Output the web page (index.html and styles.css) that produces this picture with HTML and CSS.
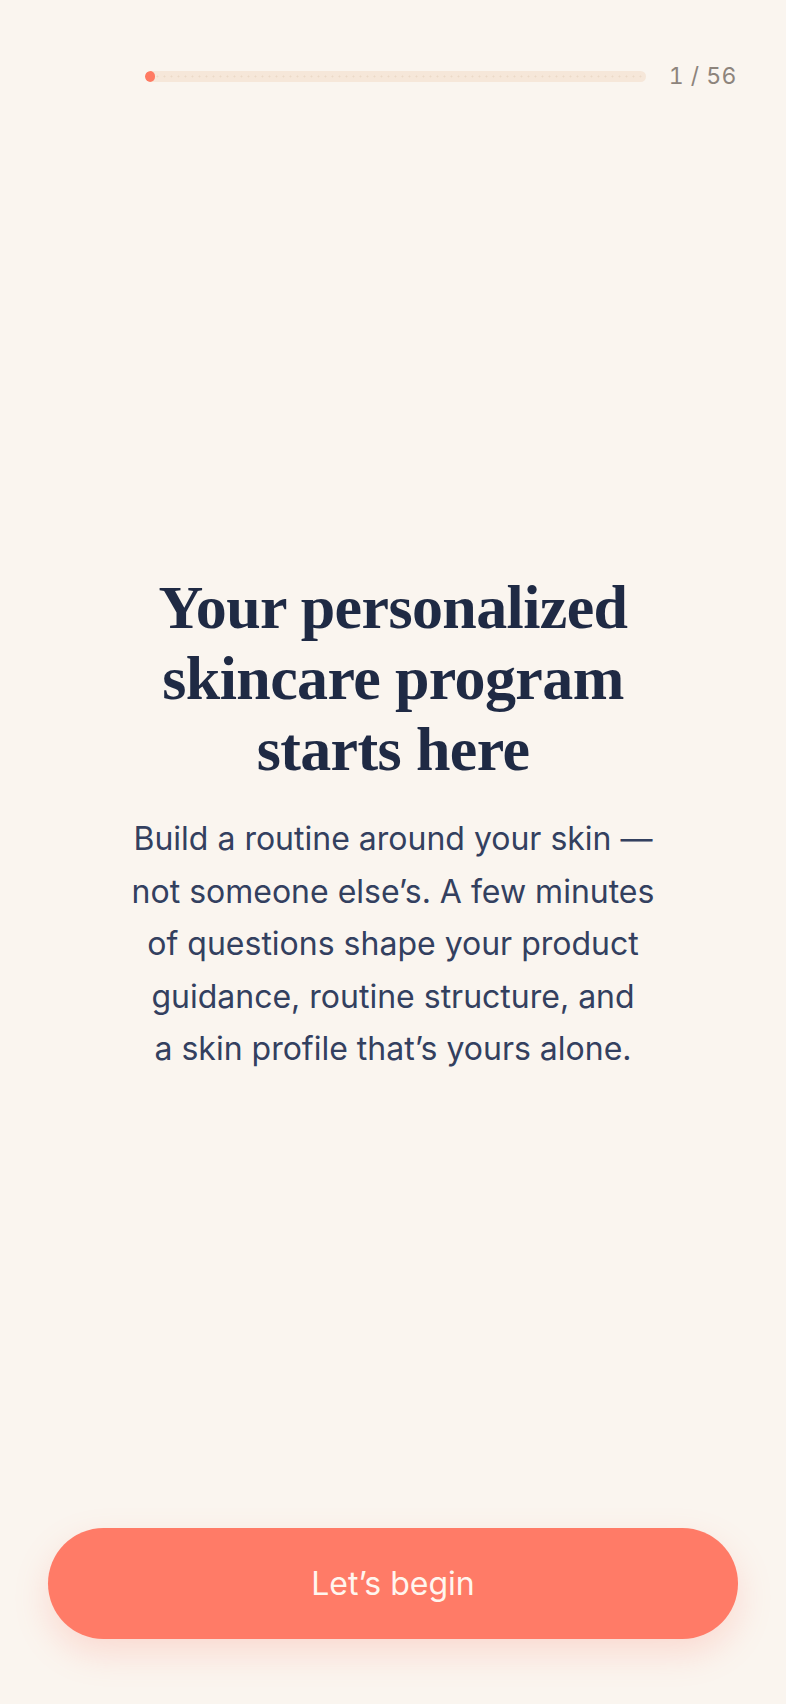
FILE: index.html
```html
<!DOCTYPE html>
<html lang="en">
<head>
<meta charset="utf-8">
<meta name="viewport" content="width=device-width, initial-scale=1">
<title>Skincare program</title>
<link rel="stylesheet" href="styles.css">
</head>
<body>
<div class="screen">
  <header class="topbar">
    <div class="back-slot" aria-hidden="true"></div>
    <div class="track" role="progressbar" aria-valuemin="1" aria-valuemax="56" aria-valuenow="1">
      <div class="fill" style="width: 1.8%"></div>
    </div>
    <span class="counter">1 / 56</span>
  </header>

  <main class="intro">
    <h1 class="title">Your personalized<br>skincare program<br>starts here</h1>
    <p class="lead">Build a routine around your skin —<br>not someone else’s. A few minutes<br>of questions shape your product<br>guidance, routine structure, and<br>a skin profile that’s yours alone.</p>
  </main>

  <footer class="actions">
    <button class="cta" type="button">Let’s begin</button>
  </footer>
</div>
</body>
</html>
```

FILE: styles.css
```css
* { box-sizing: border-box; }

html, body {
  margin: 0;
  padding: 0;
  background: #faf5ef;
}

body {
  font-family: "Inter", "Noto Sans", sans-serif;
  color: #1f2a44;
}

.screen {
  min-height: 100vh;
  display: flex;
  flex-direction: column;
}

.topbar {
  display: flex;
  align-items: center;
  height: 40px;
  margin-top: 56px;
  padding: 0 49px 0 48px;
}

.back-slot {
  width: 97px;
  flex: none;
}

.track {
  flex: 1;
  height: 11px;
  border-radius: 6px;
  background-color: #f6e7d9;
  background-image: radial-gradient(circle, rgba(214, 186, 160, 0.3) 0.8px, transparent 1.2px);
  background-size: 7px 7px;
  background-position: 2px 2px;
  overflow: hidden;
}

.fill {
  height: 100%;
  min-width: 10px;
  border-radius: 6px;
  background: #ff7a62;
}

.counter {
  flex: none;
  margin-left: 23px;
  font-size: 23px;
  letter-spacing: 0.02em;
  color: #8d847c;
  font-variant-numeric: tabular-nums;
}

.intro {
  flex: 1;
  display: flex;
  flex-direction: column;
  align-items: center;
  justify-content: center;
  text-align: center;
  padding: 24px 30px 0;
}

.title {
  margin: 0;
  font-family: "Liberation Serif", "DejaVu Serif", serif;
  font-weight: 700;
  font-size: 62px;
  line-height: 71px;
  letter-spacing: -0.01em;
  color: #1f2a44;
}

.lead {
  margin: 28px 0 0;
  font-size: 32px;
  line-height: 52.5px;
  color: #33405f;
}

.actions {
  padding: 0 48px 65px;
}

.cta {
  display: block;
  width: 100%;
  height: 111px;
  border: none;
  border-radius: 56px;
  background: #ff7b67;
  color: #fff6ef;
  font-family: "Inter", "Noto Sans", sans-serif;
  font-size: 32px;
  font-weight: 400;
  box-shadow: 0 14px 34px rgba(255, 123, 103, 0.22);
  cursor: pointer;
}
```
